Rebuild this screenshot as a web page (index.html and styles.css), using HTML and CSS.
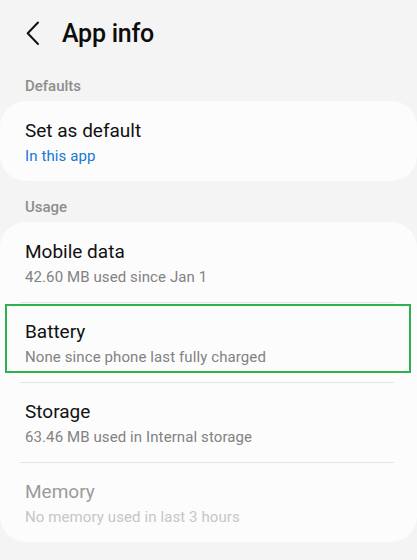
FILE: index.html
```html
<!DOCTYPE html>
<html lang="en">
<head>
<meta charset="utf-8">
<title>App info</title>
<link rel="stylesheet" href="styles.css">
</head>
<body>
<div class="screen">
  <header class="appbar">
    <svg class="back" width="16" height="25" viewBox="0 0 16 25" aria-hidden="true">
      <polyline points="14,1.5 3.7,12.3 14,23" fill="none" stroke="#111" stroke-width="2" stroke-linecap="round" stroke-linejoin="round"/>
    </svg>
    <h1 class="title">App info</h1>
  </header>

  <div class="section-label section-first">Defaults</div>
  <div class="card">
    <div class="row">
      <div class="row-body">
        <div class="row-title">Set as default</div>
        <div class="row-sub sub-link">In this app</div>
      </div>
    </div>
  </div>

  <div class="section-label">Usage</div>
  <div class="card">
    <div class="row">
      <div class="row-body">
        <div class="row-title">Mobile data</div>
        <div class="row-sub">42.60 MB used since Jan 1</div>
      </div>
    </div>
    <div class="row row-divided row-highlighted">
      <div class="row-body">
        <div class="row-title">Battery</div>
        <div class="row-sub">None since phone last fully charged</div>
      </div>
      <span class="highlight-box"></span>
    </div>
    <div class="row row-divided">
      <div class="row-body">
        <div class="row-title">Storage</div>
        <div class="row-sub">63.46 MB used in Internal storage</div>
      </div>
    </div>
    <div class="row row-divided row-disabled">
      <div class="row-body">
        <div class="row-title">Memory</div>
        <div class="row-sub">No memory used in last 3 hours</div>
      </div>
    </div>
  </div>
</div>
</body>
</html>
```

FILE: styles.css
```css
* {
  box-sizing: border-box;
}

html, body {
  margin: 0;
  padding: 0;
  background: #f4f4f4;
}

body {
  font-family: Roboto, "Noto Sans", "Liberation Sans", sans-serif;
  color: #111111;
  width: 417px;
  height: 560px;
  overflow: hidden;
}

.screen {
  display: flex;
  flex-direction: column;
}

.appbar {
  display: flex;
  align-items: center;
  padding: 19px 0 0 24px;
  height: 49px;
}

.back {
  display: block;
  flex: none;
  margin-top: -1px;
}

.title {
  margin: 0 0 0 22px;
  font-size: 25px;
  line-height: 30px;
  font-weight: 500;
  color: #0d0d0d;
  letter-spacing: -0.25px;
}

.section-label {
  margin: 16px 0 5px;
  padding-left: 25px;
  font-size: 15px;
  line-height: 20px;
  font-weight: 500;
  color: #8d8d8d;
}

.section-first {
  margin-top: 27px;
}

.card {
  background: #fcfcfc;
  border-radius: 26px;
  display: flex;
  flex-direction: column;
}

.row {
  position: relative;
  padding: 0 23px 0 20px;
}

.row-body {
  padding: 18px 0 15px 5px;
}

.row-divided .row-body {
  border-top: 1px solid #e5e5e5;
  padding-top: 17px;
}

.row-title {
  font-size: 19px;
  line-height: 24px;
  color: #111111;
}

.row-sub {
  margin-top: 3px;
  font-size: 15px;
  line-height: 20px;
  color: #828282;
  letter-spacing: 0.1px;
}

.sub-link {
  color: #1677d4;
}

.row-disabled .row-title {
  color: #9b9b9b;
}

.row-disabled .row-sub {
  color: #c6c6c6;
}

.highlight-box {
  position: absolute;
  left: 5px;
  top: 2px;
  width: 406px;
  height: 69px;
  border: 2px solid #2cb34d;
  pointer-events: none;
}
```
